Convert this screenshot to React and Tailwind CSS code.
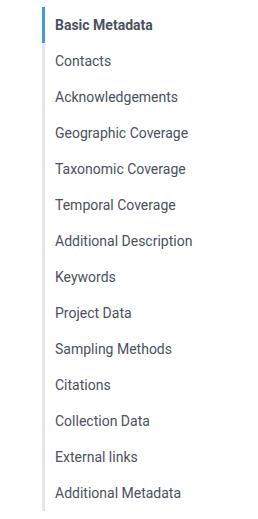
export default function App() {
  const items = [
    "Basic Metadata",
    "Contacts",
    "Acknowledgements",
    "Geographic Coverage",
    "Taxonomic Coverage",
    "Temporal Coverage",
    "Additional Description",
    "Keywords",
    "Project Data",
    "Sampling Methods",
    "Citations",
    "Collection Data",
    "External links",
    "Additional Metadata",
  ];
  return (
    <div className="w-[258px] h-[519px] bg-white pt-[7px] pl-[42px]" style={{ fontFamily: "Roboto, 'Liberation Sans', sans-serif" }}>
      <ul className="border-l-[3px] border-[#e5e7eb]">
        {items.map((t, i) => (
          <li
            key={t}
            className={
              "h-9 flex items-center pl-[10px] text-[14px] text-[#4a5160] -ml-[3px] border-l-[3px] " +
              (i === 0 ? "border-[#3d9fd3] font-bold" : "border-transparent")
            }
          >
            {t}
          </li>
        ))}
      </ul>
    </div>
  );
}
